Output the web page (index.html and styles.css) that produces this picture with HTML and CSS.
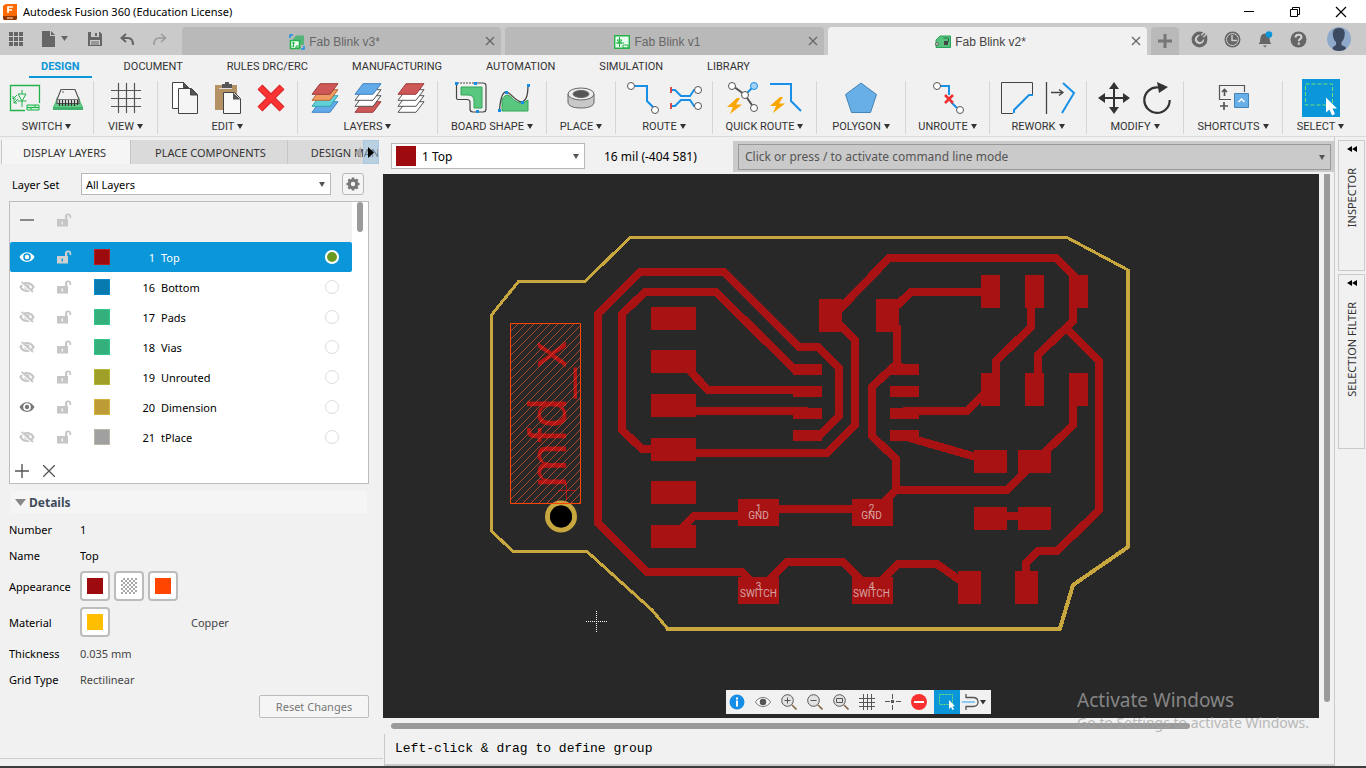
FILE: index.html
```html
<!DOCTYPE html>
<html lang="en">
<head>
<meta charset="utf-8">
<title>Autodesk Fusion 360 (Education License)</title>
<link rel="stylesheet" href="styles.css">
</head>
<body>
<svg class="defs" aria-hidden="true">
  <symbol id="caret" viewBox="0 0 6 5"><path d="M0 0h6L3 5z" fill="currentColor"/></symbol>
  <symbol id="lock" viewBox="0 0 16 16"><path d="M1 7h8V4.500a3 3 0 0 1 6.200 0V6h-1.700V4.500c0-1.800-2.300-1.800-2.300 0V7h.8v7.500H1zM5.600 9.500v3h1.300v-3z" fill="currentColor" fill-rule="evenodd"/></symbol>
  <symbol id="eye" viewBox="0 0 16 12"><path d="M.5 6C4-.5 12-.5 15.500 6 12 12.500 4 12.500.5 6zM8 2.200a3.800 3.800 0 1 0 0 7.600 3.800 3.800 0 0 0 0-7.600zm0 1.600a2.200 2.200 0 1 1 0 4.400 2.200 2.200 0 0 1 0-4.400z" fill="currentColor" fill-rule="evenodd"/></symbol>
  <symbol id="eye-off" viewBox="0 0 16 12"><path d="M1.500 6c3-5.300 10-5.300 13 0-3 5.300-10 5.300-13 0z" fill="none" stroke="currentColor" stroke-width="2.200"/><circle cx="8" cy="6" r="2.600" fill="currentColor"/><path d="M1.500 1.500l12 10" stroke="#fff" stroke-width="2"/><path d="M2.500.8l11.500 10.200" stroke="currentColor" stroke-width="1.700"/></symbol>
  <symbol id="sheet" viewBox="0 0 28 12"><path d="M9 .7h18L19 11.300H1z" stroke-width="1"/></symbol>
  <symbol id="close" viewBox="0 0 10 10"><path d="M1 1l8 8M9 1L1 9" stroke="currentColor" stroke-width="1.300"/></symbol>
  <symbol id="bolt" viewBox="0 0 16 16"><path d="M10 0L0 9h6l-3 7L15 6.500H9L13 0z" fill="#fba500"/></symbol>
  <symbol id="pick" viewBox="0 0 38 35"><path d="M3.500 3.500h27v21h-27z" fill="none" stroke="#6fe07a" stroke-dasharray="4 2"/><path d="M24 17v15l3.500-3 2.500 6 3-1.500-2.500-5.500H35z" fill="#fff"/></symbol>
</svg>

<header class="titlebar">
  <svg class="app-logo" viewBox="0 0 14 16"><path d="M1 1l2-1h11v12l-1 1H0V2z" fill="#ff6b00"/><path d="M0 12h13l1-1v4l-1 1H1l-1-1z" fill="#903700"/><path d="M5 9V3h5M5 6h4" stroke="#fff" stroke-width="1.700" fill="none"/><path d="M4 14h6" stroke="#e4b08c" stroke-width="1.500"/></svg>
  <h1 class="app-title">Autodesk Fusion 360 (Education License)</h1>
  <button class="win-btn" aria-label="Minimize"><svg viewBox="0 0 12 12"><path d="M1 5.500h10" stroke="#000"/></svg></button>
  <button class="win-btn" aria-label="Restore"><svg viewBox="0 0 12 12" fill="none" stroke="#000"><path d="M1.500 3.500h7v7h-7zM3.500 3V1.500h7v7H9"/></svg></button>
  <button class="win-btn" aria-label="Close"><svg viewBox="0 0 12 12"><path d="M1 1l10 10M11 1L1 11" stroke="#000" stroke-width="1.200"/></svg></button>
</header>

<nav class="tabbar" aria-label="Documents">
  <div class="quick">
    <button aria-label="Data panel"><svg width="14" height="14" viewBox="0 0 14 14" fill="#666"><path d="M0 0h4v4H0zM5 0h4v4H5zM10 0h4v4h-4zM0 5h4v4H0zM5 5h4v4H5zM10 5h4v4h-4zM0 10h4v4H0zM5 10h4v4H5zM10 10h4v4h-4z"/></svg></button>
    <button aria-label="File"><svg width="27" height="16" viewBox="0 0 27 16" fill="#666"><path d="M0 0h8v5h5v11H0zM9 0l4 4H9zM19 5h7l-3.500 5z"/></svg></button>
    <button aria-label="Save"><svg width="14" height="14" viewBox="0 0 14 14"><path d="M0 0h12l2 2v12H0z" fill="#666"/><path d="M3 0h8v5H3zM2 8h10v5H2z" fill="#cacaca"/><path d="M7 1h2v3H7zM3 9.500h8v1H3zM3 11.500h8v1H3z" fill="#666"/></svg></button>
    <button aria-label="Undo"><svg width="14" height="13" viewBox="0 0 14 13"><path d="M6 1L1.500 5 6 9M2 5h6q5 0 5 7" fill="none" stroke="#666" stroke-width="2"/></svg></button>
    <button aria-label="Redo"><svg width="14" height="13" viewBox="0 0 14 13"><path d="M8 1l4.500 4L8 9M12 5H6q-5 0-5 7" fill="none" stroke="#9a9a9a" stroke-width="1.600"/></svg></button>
  </div>
  <div class="doc-tab">
    <svg width="16" height="16" viewBox="0 0 16 16" fill="none"><path d="M1 4V1h3M12 15h3v-3" stroke="#1790e8" stroke-width="1.500"/><path d="M4 5l3-3.500h8V11H4z" fill="#55b578"/><path d="M1.500 6.500h9v8h-9z" fill="#effff4" stroke="#26b24b" stroke-width="1.500"/><path d="M3 9h3M3 12h2M4.500 8v5M7 12h4v2H7z" stroke="#26b24b"/></svg>
    <a href="#v3">Fab Blink v3*</a><button class="tab-x" aria-label="Close tab"><svg><use href="#close"/></svg></button>
  </div>
  <div class="doc-tab">
    <svg width="16" height="16" viewBox="0 0 16 16" fill="none"><path d="M.7 1.700h14.600v12.600H.7z" fill="#e8fff0" stroke="#26b24b" stroke-width="1.400"/><path d="M2 9h8M5.500 3v10M3 6h5L5.500 9zM3 9h5M9 11h5v3H9z" stroke="#26b24b"/></svg>
    <a href="#v1">Fab Blink v1</a><button class="tab-x" aria-label="Close tab"><svg><use href="#close"/></svg></button>
  </div>
  <div class="doc-tab current">
    <svg width="16" height="14" viewBox="0 0 16 14"><path d="M5 1h10.500v11.500H1V5z" fill="#55c37e" stroke="#2ba45b"/><path d="M8.500 3h5v4" fill="none" stroke="#27794a"/><path d="M9 6h4v4H9z" fill="#444"/><circle cx="2" cy="9" r="1.400" fill="#fff" stroke="#555"/></svg>
    <a href="#v2" aria-current="page">Fab Blink v2*</a><button class="tab-x" aria-label="Close tab"><svg><use href="#close"/></svg></button>
  </div>
  <button class="new-tab" aria-label="New tab"><svg width="14" height="14" viewBox="0 0 14 14"><path d="M7 0v14M0 7h14" stroke="#777" stroke-width="3"/></svg></button>
  <div class="account">
    <button aria-label="Extensions"><svg width="17" height="17" viewBox="0 0 17 17"><circle cx="8.500" cy="8.500" r="6.300" fill="none" stroke="#666" stroke-width="3.200"/><path d="M16 1L9 8" stroke="#cacaca" stroke-width="5"/><path d="M9.500 3.500l4 4-2.500 2.500a2.800 2.800 0 0 1-4-4z" fill="#666"/><path d="M11 5.500l3-3M13 7.500l3-3" stroke="#666" stroke-width="1.500"/></svg></button>
    <button aria-label="Job status"><svg width="17" height="17" viewBox="0 0 17 17"><circle cx="8.500" cy="8.500" r="8" fill="#666"/><circle cx="8.500" cy="8.500" r="6" fill="none" stroke="#cacaca"/><path d="M8 4v5.500h5" fill="none" stroke="#cacaca" stroke-width="1.500"/></svg></button>
    <button aria-label="Notifications"><svg width="17" height="17" viewBox="0 0 17 17"><path d="M1.500 13c2-1.500 1.500-4 2-6.500C4 4 6 2.500 8 2.500S12 4 12.500 6.500c.5 2.500 0 5 2 6.500zM6 14.500h4L8 16.500z" fill="#666"/><circle cx="12" cy="3.500" r="3.300" fill="#0a96d8"/></svg></button>
    <button aria-label="Help"><svg width="17" height="17" viewBox="0 0 17 17"><circle cx="8.500" cy="8.500" r="8" fill="#666"/><path d="M5.500 6.500c0-4 6-3.500 6-.5 0 2-2.700 1.800-2.700 4.300M8.800 11.500V13.800" fill="none" stroke="#d4d4d4" stroke-width="2"/></svg></button>
    <button class="avatar" aria-label="Account"><svg width="24" height="24" viewBox="0 0 24 24"><defs><clipPath id="round"><circle cx="12" cy="12" r="12"/></clipPath></defs><g clip-path="url(#round)"><path d="M0 0h24v24H0z" fill="#8fa9ca"/><path d="M12 1c5 0 6.500 3.500 5.500 8-.5 3-1.500 5-3 6v3l4 2 2 4H5l1-4 3-2v-3c-1.500-1-2.500-3-3-6C5 4.500 7 1 12 1z" fill="#3c4a62"/></g></svg></button>
  </div>
</nav>

<nav class="ribbon-tabs" aria-label="Ribbon">
  <a class="active" href="#design">DESIGN</a><a href="#document">DOCUMENT</a><a href="#rules">RULES DRC/ERC</a><a href="#manufacturing">MANUFACTURING</a><a href="#automation">AUTOMATION</a><a href="#simulation">SIMULATION</a><a href="#library">LIBRARY</a>
</nav>

<section class="ribbon" aria-label="Tools">
  <div class="group"><div class="tools">
    <button aria-label="Schematic"><svg viewBox="0 0 32 32" fill="none" stroke="#21b24b"><path d="M16 28.500H1.500v-25h29V21" stroke-width="1.300"/><path d="M13 8v4M9 12h8l-4 7zM8.500 19h9M13 19v6M8 13l-4 4M9 17l-4 4M4 14v3h3M5 18v3h3"/><path d="M18 23h12v5H18zM18 25.500h12M22 25.500V28M26 23v2.500" fill="#c5f5d2"/></svg></button>
    <button aria-label="Board"><svg viewBox="0 0 32 32"><path d="M5 17h22l4 8v3H1v-3z" fill="#42b36d"/><path d="M5 15h22l3 10H2z" fill="#64cc8a"/><path d="M9 7.500h14l4 10v4H5v-4z" fill="#f2f2f2" stroke="#555" stroke-width="1.200"/><path d="M5 17.500h22" stroke="#777"/><path d="M7.500 18v6M10.500 18v6M13.500 18v6M16.500 18v6M19.500 18v6M22.500 18v6M25.500 18v5" stroke="#333" stroke-width="1.300"/><path d="M10 10h2" stroke="#666"/></svg></button>
  </div><button class="menu">SWITCH<svg><use href="#caret"/></svg></button></div>
  <div class="group"><div class="tools">
    <button aria-label="Grid"><svg viewBox="0 0 32 32"><path d="M1 8.500h30M1 16.500h30M1 24.500h30M8.500 1v30M16.500 1v30M24.500 1v30" stroke="#555" stroke-width="1.200"/></svg></button>
  </div><button class="menu">VIEW<svg><use href="#caret"/></svg></button></div>
  <div class="group"><div class="tools">
    <button aria-label="Copy"><svg viewBox="0 0 32 32" fill="#fff" stroke="#444"><path d="M3.500.5h11l5 5v21h-16z"/><path d="M14.500.5v5h5z" fill="#555"/><path d="M9.500 6.500h13l6 6v19h-19z" fill="#f5f5f5"/><path d="M21.500 6.500v6.500h7z" fill="#555"/></svg></button>
    <button aria-label="Paste"><svg viewBox="0 0 32 32"><path d="M3 3h22v25H3z" fill="#b49264"/><path d="M10 2h3V0h4v2h3v4H10z" fill="#555"/><path d="M7 6.500h13" stroke="#ddd"/><path d="M11.500 10.500h11l6 6v15h-17z" fill="#f8f8f8" stroke="#444"/><path d="M21 10.500v7h7.500z" fill="#555"/></svg></button>
    <button aria-label="Delete"><svg viewBox="0 0 32 32"><path d="M5 5l22 22M27 5L5 27" stroke="#d32424" stroke-width="7"/><path d="M5 5l22 22M27 5L5 27" stroke="#fb3333" stroke-width="5"/></svg></button>
  </div><button class="menu">EDIT<svg><use href="#caret"/></svg></button></div>
  <div class="group"><div class="tools">
    <button aria-label="All layers"><svg viewBox="0 0 32 32"><use href="#sheet" x="2" y="19" width="28" height="12" fill="#62aae8" stroke="#3d83c0"/><use href="#sheet" x="2" y="13" width="28" height="12" fill="#60d1d8" stroke="#36a4ac"/><use href="#sheet" x="2" y="7" width="28" height="12" fill="#ee9a61" stroke="#b66b36"/><use href="#sheet" x="2" y="1" width="28" height="12" fill="#ce5757" stroke="#9f3c3c"/></svg></button>
    <button aria-label="Top and bottom layers"><svg viewBox="0 0 32 32"><use href="#sheet" x="2" y="19" width="28" height="12" fill="#ce5757" stroke="#9f3c3c"/><use href="#sheet" x="2" y="13" width="28" height="12" fill="#fff" stroke="#555"/><use href="#sheet" x="2" y="7" width="28" height="12" fill="#fff" stroke="#555"/><use href="#sheet" x="2" y="1" width="28" height="12" fill="#62aae8" stroke="#3d83c0"/></svg></button>
    <button aria-label="Top layer"><svg viewBox="0 0 32 32"><use href="#sheet" x="2" y="19" width="28" height="12" fill="#fff" stroke="#555"/><use href="#sheet" x="2" y="13" width="28" height="12" fill="#fff" stroke="#555"/><use href="#sheet" x="2" y="7" width="28" height="12" fill="#fff" stroke="#555"/><use href="#sheet" x="2" y="1" width="28" height="12" fill="#ce5757" stroke="#9f3c3c"/></svg></button>
  </div><button class="menu">LAYERS<svg><use href="#caret"/></svg></button></div>
  <div class="group"><div class="tools">
    <button aria-label="Outline polyline"><svg viewBox="0 0 32 32"><path d="M6 5h21v21h-8v-7q0-6-6-6H6z" fill="#5ac77e" stroke="#34a35b"/><path d="M1.500 1v15q0 1.500 1.500 1.500h9q3 0 3 3V27q0 3 3 3h10q3 0 3-3V4q0-3-3-3h-6" fill="none" stroke="#444" stroke-width="1.200"/><path d="M2 1h20" stroke="#444" stroke-dasharray="2 1"/><path d="M0 0h3v3H0zM19 0h3v3h-3zM21 28h3v3h-3z" fill="#168ee8"/></svg></button>
    <button aria-label="Outline spline"><svg viewBox="0 0 32 32"><path d="M4 29V18q3-7 8-4 7 8 13 7l5-3v11z" fill="#5ac77e" stroke="#34a35b"/><path d="M1.500 28Q3 10 8 10c5 0 9 10 16 10 5-2 6-8 6-18" fill="none" stroke="#444" stroke-width="1.300"/><path d="M0 27h3v3H0zM7 9h3v3H7zM23 19h3v3h-3zM29 2h3v3h-3z" fill="#168ee8"/></svg></button>
  </div><button class="menu">BOARD SHAPE<svg><use href="#caret"/></svg></button></div>
  <div class="group"><div class="tools">
    <button aria-label="Hole"><svg viewBox="0 0 32 32" stroke="#666"><path d="M3 12v8c0 4 5 6 13 6s13-2 13-6v-8z" fill="#c8c8c8"/><ellipse cx="16" cy="12" rx="13" ry="6" fill="#ececec"/><ellipse cx="16" cy="12" rx="8" ry="3.500" fill="#555"/></svg></button>
  </div><button class="menu">PLACE<svg><use href="#caret"/></svg></button></div>
  <div class="group"><div class="tools">
    <button aria-label="Route manual"><svg viewBox="0 0 32 32" fill="none"><path d="M8 4h12v15l7 7" stroke="#1990e8" stroke-width="2"/><circle cx="4" cy="4" r="3.500" fill="#fff" stroke="#555"/><circle cx="28" cy="28" r="3.500" fill="#fff" stroke="#555"/></svg></button>
    <button aria-label="Route differential pair"><svg viewBox="0 0 32 32" fill="none"><path d="M1 8h4l6 6h9l4-6h3M1 24h4l6-6h9l4 6h3" stroke="#1990e8" stroke-width="2"/><path d="M1 5v6M1 21v6" stroke="#d33" stroke-width="1.700"/><circle cx="28" cy="8" r="3.500" fill="#fff" stroke="#555"/><circle cx="28" cy="24" r="3.500" fill="#fff" stroke="#555"/></svg></button>
  </div><button class="menu">ROUTE<svg><use href="#caret"/></svg></button></div>
  <div class="group"><div class="tools">
    <button aria-label="Quick route airwire"><svg viewBox="0 0 32 32"><path d="M6 4l12 9 9 13" stroke="#555" stroke-width="2" fill="none"/><path d="M19 12l8-8" stroke="#1990e8" stroke-width="2"/><circle cx="5" cy="4" r="3.500" fill="#fff" stroke="#555"/><circle cx="27" cy="4" r="3.500" fill="#a5d2f5" stroke="#1990e8"/><circle cx="18" cy="13" r="3.500" fill="#fff" stroke="#555"/><circle cx="27" cy="26" r="3.500" fill="#fff" stroke="#555"/><use href="#bolt" x="0" y="16" width="16" height="16"/></svg></button>
    <button aria-label="Quick route signal"><svg viewBox="0 0 32 32"><path d="M0 2h21v17l10 10" stroke="#1990e8" stroke-width="2" fill="none"/><use href="#bolt" x="0" y="15" width="16" height="16"/></svg></button>
  </div><button class="menu">QUICK ROUTE<svg><use href="#caret"/></svg></button></div>
  <div class="group"><div class="tools">
    <button aria-label="Polygon"><svg viewBox="0 0 32 32"><path d="M16 1l15.500 11.500-6 18h-19l-6-18z" fill="#68afe7" stroke="#4684b5"/></svg></button>
  </div><button class="menu">POLYGON<svg><use href="#caret"/></svg></button></div>
  <div class="group"><div class="tools">
    <button aria-label="Unroute"><svg viewBox="0 0 32 32" fill="none"><path d="M8 4h9v9M19 20l6 6" stroke="#1990e8" stroke-width="2"/><path d="M13 13l8 8M21 13l-8 8" stroke="#f03030" stroke-width="2.500"/><circle cx="5" cy="4" r="3.500" fill="#fff" stroke="#555"/><circle cx="28" cy="28" r="3.500" fill="#fff" stroke="#555"/></svg></button>
  </div><button class="menu">UNROUTE<svg><use href="#caret"/></svg></button></div>
  <div class="group"><div class="tools">
    <button aria-label="Miter"><svg viewBox="0 0 32 32" fill="none"><path d="M12 31.500H.5V.5h31v12" stroke="#444"/><path d="M13 31v-3l15-15h4" stroke="#1990e8" stroke-width="2"/></svg></button>
    <button aria-label="Slice"><svg viewBox="0 0 32 32" fill="none"><path d="M2.500 0v32M7 10.500h11M15 7.500l4 3-4 3" stroke="#444" stroke-width="1.300"/><path d="M19 1l11 10-12 20" stroke="#1990e8" stroke-width="2"/></svg></button>
  </div><button class="menu">REWORK<svg><use href="#caret"/></svg></button></div>
  <div class="group"><div class="tools">
    <button aria-label="Move"><svg viewBox="0 0 32 32"><path d="M16 4v24M4 16h24" stroke="#333" stroke-width="2"/><path d="M16 0l5 7H11zM16 32l5-7H11zM0 16l7-5v10zM32 16l-7-5v10z" fill="#333"/></svg></button>
    <button aria-label="Rotate"><svg viewBox="0 0 32 32"><path d="M17 5.500A12.700 12.700 0 1 0 28.700 18" fill="none" stroke="#333" stroke-width="2.200"/><path d="M16 0l11 5-9 6z" fill="#333"/></svg></button>
  </div><button class="menu">MODIFY<svg><use href="#caret"/></svg></button></div>
  <div class="group"><div class="tools">
    <button aria-label="Shortcuts"><svg viewBox="0 0 32 32" fill="none"><path d="M14 17.500H2.500v-14h25V10" stroke="#555" stroke-width="1.200"/><path d="M7.500 8v6M5 10l2.500-2.500L10 10M7 20v8M3 24h8" stroke="#555" stroke-width="1.700"/><path d="M17.500 11.500h14v14h-14z" fill="#68afe7" stroke="#4684b5"/><path d="M21.500 20l3-3 3 3" stroke="#fff" stroke-width="1.500"/></svg></button>
  </div><button class="menu">SHORTCUTS<svg><use href="#caret"/></svg></button></div>
  <div class="group"><div class="tools">
    <button class="pick" aria-label="Select"><svg><use href="#pick"/></svg></button>
  </div><button class="menu">SELECT<svg><use href="#caret"/></svg></button></div>
</section>

<main class="workspace">
  <aside class="panel">
    <div class="panel-tabs">
      <button class="panel-tab on">DISPLAY LAYERS</button><button class="panel-tab">PLACE COMPONENTS</button><button class="panel-tab">DESIGN MANAGER</button>
      <div class="tab-scroll"><button aria-label="Scroll left"><svg width="6" height="11" viewBox="0 0 6 11"><path d="M6 0v11L0 5.500z" fill="#a5a5a5"/></svg></button><button class="right" aria-label="Scroll right"><svg width="6" height="11" viewBox="0 0 6 11"><path d="M0 0v11l6-5.500z"/></svg></button></div>
    </div>
    <div class="layer-set">
      <label for="set">Layer Set</label>
      <span class="drop"><select id="set"><option>All Layers</option></select><svg><use href="#caret"/></svg></span>
      <button class="gear" aria-label="Layer settings"><svg width="14" height="14" viewBox="-7 -7 14 14"><circle r="3.700" fill="none" stroke="#777" stroke-width="3"/><path d="M0-6.500V-4M0 6.500V4M-6.500 0H-4M6.500 0H4M-4.600-4.600l1.600 1.600M4.600 4.600L3 3M-4.600 4.600L-3 3M4.600-4.600L3-3" stroke="#777" stroke-width="2.600"/></svg></button>
    </div>
    <div class="layers">
      <div class="layer-list">
        <div class="layer head"><button class="vis" aria-label="Toggle all"><svg viewBox="0 0 16 12"><path d="M1 6h14" stroke="#888" stroke-width="2"/></svg></button><button class="lock" aria-label="Lock all"><svg><use href="#lock"/></svg></button></div>
        <div class="layer selected"><button class="vis" aria-label="Hide Top"><svg><use href="#eye"/></svg></button><button class="lock" aria-label="Lock Top"><svg><use href="#lock"/></svg></button><span class="swatch top"></span><label for="l1"><b>1</b>Top</label><input type="radio" name="layer" id="l1" checked></div>
        <div class="layer"><button class="vis" aria-label="Show Bottom"><svg><use href="#eye-off"/></svg></button><button class="lock" aria-label="Lock Bottom"><svg><use href="#lock"/></svg></button><span class="swatch bottom"></span><label for="l16"><b>16</b>Bottom</label><input type="radio" name="layer" id="l16"></div>
        <div class="layer"><button class="vis" aria-label="Show Pads"><svg><use href="#eye-off"/></svg></button><button class="lock" aria-label="Lock Pads"><svg><use href="#lock"/></svg></button><span class="swatch pads-fill"></span><label for="l17"><b>17</b>Pads</label><input type="radio" name="layer" id="l17"></div>
        <div class="layer"><button class="vis" aria-label="Show Vias"><svg><use href="#eye-off"/></svg></button><button class="lock" aria-label="Lock Vias"><svg><use href="#lock"/></svg></button><span class="swatch pads-fill"></span><label for="l18"><b>18</b>Vias</label><input type="radio" name="layer" id="l18"></div>
        <div class="layer"><button class="vis" aria-label="Show Unrouted"><svg><use href="#eye-off"/></svg></button><button class="lock" aria-label="Lock Unrouted"><svg><use href="#lock"/></svg></button><span class="swatch unrouted"></span><label for="l19"><b>19</b>Unrouted</label><input type="radio" name="layer" id="l19"></div>
        <div class="layer"><button class="vis shown" aria-label="Hide Dimension"><svg><use href="#eye"/></svg></button><button class="lock" aria-label="Lock Dimension"><svg><use href="#lock"/></svg></button><span class="swatch dimension"></span><label for="l20"><b>20</b>Dimension</label><input type="radio" name="layer" id="l20"></div>
        <div class="layer"><button class="vis" aria-label="Show tPlace"><svg><use href="#eye-off"/></svg></button><button class="lock" aria-label="Lock tPlace"><svg><use href="#lock"/></svg></button><span class="swatch tplace"></span><label for="l21"><b>21</b>tPlace</label><input type="radio" name="layer" id="l21"></div>
      </div>
      <div class="list-scroll"><span></span></div>
      <div class="list-actions"><button aria-label="Add layer"><svg width="14" height="14" viewBox="0 0 14 14"><path d="M7 0v14M0 7h14" stroke="#555" stroke-width="1.400"/></svg></button><button aria-label="Remove layer"><svg width="12" height="12" viewBox="0 0 12 12"><path d="M0 0l12 12M12 0L0 12" stroke="#555" stroke-width="1.300"/></svg></button></div>
    </div>
    <h2 class="details-head"><svg width="11" height="7" viewBox="0 0 11 7"><path d="M0 0h11L5.500 7z" fill="#888"/></svg>Details</h2>
    <div class="details">
      <label for="num">Number</label><input id="num" value="1">
      <label for="nam">Name</label><input id="nam" value="Top">
      <span>Appearance</span><div class="chips"><button aria-label="Color"><i class="chip"></i></button><button aria-label="Fill pattern"><i class="chip checker"></i></button><button aria-label="Highlight"><i class="chip bright"></i></button></div>
      <span>Material</span><div class="chips"><button aria-label="Material color"><i class="chip copper"></i></button><span class="value material">Copper</span></div>
      <span>Thickness</span><span class="value">0.035 mm</span>
      <span>Grid Type</span><span class="value">Rectilinear</span>
    </div>
    <button class="reset">Reset Changes</button>
  </aside>

  <section class="editor">
    <div class="command-row">
      <span class="drop layer-drop"><i class="chip"></i><select aria-label="Active layer"><option>1 Top</option></select><svg><use href="#caret"/></svg></span>
      <output class="coords">16 mil (-404 581)</output>
      <div class="command"><span class="drop"><input type="text" aria-label="Command line" placeholder="Click or press / to activate command line mode"><svg><use href="#caret"/></svg></span></div>
    </div>
    <div class="canvas">
      <svg class="board" viewBox="383 174 936 544" role="img" aria-label="Board layout">
        <defs><pattern id="hatch" width="8" height="8" patternUnits="userSpaceOnUse" x="511" y="323"><path d="M-1 9L9-1M-1 1l2-2M7 9l2-2" stroke="#e8552a" stroke-width=".7"/></pattern></defs>
        <g class="outline">
          <path d="M1067 237.500H630L585 281.500H518.500L491.500 315V531L513 551.500H587L652 610L667 628" />
          <path d="M1066 237L1128 270" />
          <path class="thick" d="M1128 269V547L1073 585L1060 628.500H666" />
        </g>
        <g class="traces">
          <path d="M760 590L742 572H647L598 523V314L640 272H724L799 347H818L839 368V416L821 434H808"/>
          <path d="M660 449H642L622 430V314L645 292H716L794 369H808"/>
          <path d="M688 369L708 390H808M680 411H808"/>
          <path d="M680 453H827L855 425V340L835 320"/>
          <path d="M835 314L889 258H1056L1080 282M1073 300V321L1038 355V380"/>
          <path d="M1065 327L1099 361V510L1057 551H1038L1026 563V580"/>
          <path d="M890 312L911 292H990M1031 290V327L996 361V390"/>
          <path d="M897 325V370M903 367H893L872 387V436L896 459V490L880 506"/>
          <path d="M903 411H967L992 386M903 436L976 457"/>
          <path d="M896 490H1007L1034 463M1040 457L1073 425V390"/>
          <path d="M770 509H860M680 530L694 516H745M758 591L787 562H843L868 587M875 587L898 564H937L964 583M1000 516H1025"/>
        </g>
        <path class="pads" d="M651 307h45v23h-45zM651 350h45v23h-45zM651 394h45v23h-45zM651 438h45v23h-45zM651 481h45v23h-45zM651 525h45v23h-45z
          M793 364h29v11h-29zM793 386h29v11h-29zM793 408h29v11h-29zM793 430h29v11h-29z
          M890 364h29v11h-29zM890 386h29v11h-29zM890 408h29v11h-29zM890 430h29v11h-29z
          M819 299h23v33h-23zM876 299h23v33h-23zM981 275h19v33h-19zM1025 275h19v33h-19zM1069 275h19v33h-19z
          M981 373h19v33h-19zM1025 373h19v33h-19zM1069 373h19v33h-19z
          M974 450h33v23h-33zM1018 450h33v23h-33zM974 507h33v23h-33zM1018 507h33v23h-33z
          M738 499h41v27h-41zM852 499h41v27h-41zM738 577h41v27h-41zM852 577h41v27h-41zM958 571h23v33h-23zM1015 571h23v33h-23z"/>
        <circle cx="561" cy="516.500" r="13.500" fill="none" stroke="#c8a83e" stroke-width="5"/><circle cx="561" cy="516.500" r="11" fill="#000"/>
        <text class="maker" transform="translate(566 488) rotate(-90)">mfd_x</text>
        <path d="M566.500 483v17M558 490.500h17" stroke="#a81212"/>
        <path d="M510.500 323.500h70v180h-70z" fill="url(#hatch)" stroke="#ff4500"/>
        <g class="pad-names"><text x="758.500" y="512">1</text><text x="758.500" y="519">GND</text><text x="871.500" y="512">2</text><text x="871.500" y="519">GND</text><text x="758.500" y="590">3</text><text x="758.500" y="597">SWITCH</text><text x="871.500" y="590">4</text><text x="871.500" y="597">SWITCH</text></g>
        <path d="M586 621.500h21M596.500 611v21" stroke="#fff" stroke-dasharray="1 1"/>
      </svg>
      <div class="view-bar">
        <button aria-label="Info"><svg viewBox="0 0 16 16"><circle cx="8" cy="8" r="7.500" fill="#168ee8"/><path d="M8 6.500V12.500M8 3.500v2" stroke="#fff" stroke-width="2"/></svg></button>
        <button aria-label="Visibility"><svg viewBox="0 0 16 16"><path d="M.5 8C4 2 12 2 15.500 8 12 14 4 14 .5 8z" fill="#fff" stroke="#777"/><circle cx="8" cy="8" r="3.300" fill="#555"/></svg></button>
        <button aria-label="Zoom in"><svg viewBox="0 0 16 16" fill="none"><circle cx="6.500" cy="6.500" r="5.800" fill="#e3e3e3" stroke="#555"/><path d="M3.500 6.500h6M6.500 3.500v6" stroke="#555"/><path d="M11 11l4.500 4.500" stroke="#8a6b4c" stroke-width="1.700"/></svg></button>
        <button aria-label="Zoom out"><svg viewBox="0 0 16 16" fill="none"><circle cx="6.500" cy="6.500" r="5.800" fill="#e3e3e3" stroke="#555"/><path d="M3.500 6.500h6" stroke="#555"/><path d="M11 11l4.500 4.500" stroke="#8a6b4c" stroke-width="1.700"/></svg></button>
        <button aria-label="Zoom to fit"><svg viewBox="0 0 16 16" fill="none"><circle cx="6.500" cy="6.500" r="5.800" fill="#e3e3e3" stroke="#555"/><path d="M3.500 4.500h6v4h-6z" stroke="#555"/><path d="M11 11l4.500 4.500" stroke="#8a6b4c" stroke-width="1.700"/></svg></button>
        <button aria-label="Grid"><svg viewBox="0 0 16 16"><path d="M0 4.500h16M0 8.500h16M0 12.500h16M4.500 0v16M8.500 0v16M12.500 0v16" stroke="#555"/></svg></button>
        <button aria-label="Origin"><svg viewBox="0 0 16 16"><path d="M7.500 0v5M7.500 11v5M0 7.500h5M11 7.500h5" stroke="#555"/><path d="M6 6h3v3H6z" fill="#555"/></svg></button>
        <button aria-label="Stop"><svg viewBox="0 0 16 16"><circle cx="8" cy="8" r="8" fill="#fb3030"/><path d="M3 8h10" stroke="#fff" stroke-width="2"/></svg></button>
        <button class="on" aria-label="Select"><svg viewBox="0 0 16 16"><path d="M.5.5h13v10H.5z" fill="none" stroke="#6fe07a" stroke-dasharray="2 1"/><path d="M10 6v9l2-2 1.500 3 1.500-.8-1.500-3H16z" fill="#fff"/></svg></button>
        <button class="wide" aria-label="Selection options"><svg viewBox="0 0 24 16" fill="none"><path d="M4 0v3.500h7q5 0 5 4.500t-5 4.500H4V16" stroke="#555" stroke-width="1.300"/><path d="M0 8h13" stroke="#8cc8f2" stroke-width="2"/><path d="M18 6h6l-3 4.500z" fill="#333"/></svg></button>
      </div>
      <div class="watermark"><p class="big">Activate Windows</p><p>Go to Settings to activate Windows.</p></div>
    </div>
    <div class="vscroll"><span></span></div>
    <div class="hscroll"><span></span></div>
    <div class="status">Left-click &amp; drag to define group</div>
  </section>

  <aside class="side">
    <button class="side-tab inspector"><svg width="10" height="6" viewBox="0 0 10 6"><path d="M5 0v6L0 3zM10 0v6L5 3z"/></svg><span>INSPECTOR</span></button>
    <button class="side-tab filter"><svg width="10" height="6" viewBox="0 0 10 6"><path d="M5 0v6L0 3zM10 0v6L5 3z"/></svg><span>SELECTION FILTER</span></button>
  </aside>
</main>
</body>
</html>
```

FILE: styles.css
```css
* { box-sizing: border-box; }
body { margin: 0; min-height: 100vh; display: flex; flex-direction: column; background: #f1f1f1; color: #000; font-family: "Noto Sans", sans-serif; font-size: 11px; border-bottom: 2px solid #3d3d3f; }
button, input, select { font: inherit; color: inherit; margin: 0; padding: 0; border: 0; background: none; }
button { display: flex; align-items: center; justify-content: center; }
a { color: inherit; text-decoration: none; }
svg { display: block; flex: none; }
.defs { position: absolute; width: 0; height: 0; }

.titlebar { display: flex; align-items: center; height: 23px; padding-left: 3px; background: #fff; }
.app-logo { width: 14px; height: 16px; }
.app-title { flex: 1; margin: 0 0 0 6px; font: 11px "Noto Sans", sans-serif; }
.win-btn { width: 46px; height: 20px; }
.win-btn svg { width: 12px; height: 12px; }
.win-btn:last-child { margin-right: 2px; }

.tabbar { display: flex; gap: 4px; height: 32px; padding-top: 4px; background: #cacaca; font: 12px "Liberation Sans", sans-serif; }
.quick { display: flex; align-items: center; justify-content: space-between; width: 178px; padding: 0 11px 4px 9px; }
.doc-tab { flex: 1; display: flex; align-items: center; justify-content: center; gap: 4px; padding: 1px 14px 0 0; background: #b9b9b9; color: #666; border-radius: 4px 4px 0 0; position: relative; }
.doc-tab.current { background: #f1f1f1; color: #444; }
.tab-x { position: absolute; right: 6px; top: 9px; color: #666; }
.tab-x svg { width: 10px; height: 10px; }
.new-tab { width: 28px; background: #b9b9b9; border-radius: 4px 4px 0 0; }
.account { display: flex; align-items: center; gap: 16px; padding: 0 15px 4px 8px; }
.avatar { margin-left: 4px; }

.ribbon-tabs { display: flex; gap: 20px; height: 23px; padding-left: 29px; font: 11px/23px Roboto, sans-serif; color: #333; }
.ribbon-tabs a { padding: 0 12px; }
.ribbon-tabs .active { color: #0a96d8; font-weight: 700; box-shadow: inset 0 -2px #0a96d8; }

.ribbon { display: grid; grid-template-columns: 94fr 64fr 140fr 140fr 109fr 69fr 97fr 104fr 89fr 84fr 97fr 97fr 99fr 75fr; height: 59px; padding-right: 8px; border-bottom: 1px solid #d9d9d9; font: 11px Roboto, sans-serif; color: #333; }
.group { display: flex; flex-direction: column; align-items: center; padding-top: 1px; height: 53px; margin-top: 3px; border-right: 1px solid #d6d6d6; }
.group:last-child { border: 0; }
.tools { display: flex; align-items: center; gap: 11px; height: 32px; }
.tools svg { width: 32px; height: 32px; }
.tools .pick { background: #0a96d8; }
.tools .pick svg { width: 38px; height: 38px; }
.menu { gap: 3px; height: 16px; margin-top: 5px; white-space: nowrap; }
.menu svg { width: 6px; height: 5px; }

.workspace { flex: 1; display: grid; grid-template-columns: 383px 1fr 31px; }
.panel { border-bottom: 1px solid #d0d0d0; margin-bottom: 7px; padding: 3px 14px 0 0; }
.panel-tabs { position: relative; display: flex; height: 24px; margin: 0 -10px 0 1px; overflow: hidden; color: #333; }
.panel-tab { flex: none; background: #dadada; border-left: 1px solid #c6c6c6; padding: 0 21px 0 24px; white-space: nowrap; }
.panel-tab.on { background: #f5f5f5; padding: 0 24px 0 21px; }
.panel-tab:nth-child(3) { padding: 0 0 0 23px; }
.tab-scroll { position: absolute; right: 0; top: 0; display: flex; height: 24px; }
.tab-scroll button { width: 10px; }
.tab-scroll .right { width: 16px; background: rgba(154, 197, 232, .5); border: 1px solid #a8c9e0; }
.layer-set { display: flex; align-items: center; gap: 11px; margin: 9px 5px 0 12px; height: 22px; }
.layer-set label { width: 58px; }
.drop { position: relative; display: flex; flex: 1; height: 22px; background: #fff; border: 1px solid #b8b8b8; }
.drop select, .drop input { width: 100%; padding: 0 4px; appearance: none; outline: 0; }
.drop svg { position: absolute; right: 5px; top: 8px; width: 6px; height: 5px; color: #555; pointer-events: none; }
.gear { width: 22px; height: 22px; border: 1px solid #b8b8b8; border-radius: 3px; background: #f5f5f5; }
.layers { display: grid; grid-template-columns: 1fr 16px; margin: 6px 0 0 9px; border: 1px solid #bcbcbc; background: #fff; }
.layer { display: grid; grid-template-columns: 34px 40px 26px 1fr 40px; align-items: center; height: 30px; color: #000; font-size: 11px; }
.layer.head { height: 40px; background: #f1f1f1; padding-bottom: 4px; }
.layer.selected { background: #0a96d8; color: #fff; border-radius: 2px; }
.vis, .lock { color: #c6c6c6; }
.vis svg { width: 16px; height: 12px; }
.lock svg { width: 16px; height: 16px; }
.vis.shown { color: #777; }
.selected .vis { color: #fff; }
.selected .lock { color: #d0d0d0; }
.swatch { justify-self: end; width: 16px; height: 16px; border: 1px solid; }
.swatch.top { background: #9e0b0f; border-color: #b81e20; }
.swatch.bottom { background: #087ab0; border-color: #0a8ccc; }
.swatch.pads-fill { background: #35af7c; border-color: #2fc88a; }
.swatch.unrouted { background: #a0a028; border-color: #b4b43a; }
.swatch.dimension { background: #bd9b37; border-color: #d6b33a; }
.swatch.tplace { background: #a0a0a0; border-color: #bbb6a6; }
.layer label { display: flex; gap: 6px; }
.layer b { width: 45px; text-align: right; font-weight: 400; }
.layer input { appearance: none; width: 14px; height: 14px; border: 1px solid #dcdcdc; border-radius: 50%; justify-self: center; background: #fff; }
.layer input:checked { background: #6b9a22; border: 2px solid #fff; }
.list-scroll { padding-left: 5px; }
.list-scroll span { display: block; width: 6px; height: 30px; border-radius: 3px; background: #9a9a9a; }
.list-actions { grid-column: 1 / -1; display: flex; gap: 14px; height: 31px; padding: 6px 0 0 5px; }
.details-head { display: flex; align-items: center; gap: 3px; height: 22px; margin: 7px 2px 0 11px; padding-left: 4px; background: #f5f5f5; font-size: 12px; color: #3f4c5b; }
.details { display: grid; grid-template-columns: 71px 1fr; grid-template-rows: 26px 26px 36px 36px 26px 26px; align-items: center; margin: 3px 0 0 9px; }
.value { color: #444; }
.chips { display: flex; align-items: center; gap: 4px; }
.chips button { width: 30px; height: 30px; border: 2px solid #bcbcbc; border-radius: 4px; background: #fff; }
.chip { display: block; width: 16px; height: 16px; background: #9e0b0f; }
.chip.checker { background: repeating-conic-gradient(#aaa 0 25%, #fff 0 50%) 0 0 / 4px 4px; }
.chip.bright { background: #ff4500; }
.chip.copper { background: #ffbf00; }
.material { margin-left: 77px; }
.reset { width: 110px; height: 23px; margin: 3px 0 0 auto; border: 1px solid #bcbcbc; border-radius: 2px; background: #f5f5f5; color: #777; }

.editor { display: grid; grid-template-columns: 1fr 15px; grid-template-rows: 37px 1fr 16px 32px; border-right: 1px solid #cacaca; }
.command-row { grid-column: 1 / -1; display: flex; align-items: center; padding: 1px 0 0 8px; font-size: 12px; }
.layer-drop { flex: none; width: 194px; height: 26px; align-items: center; padding-left: 4px; }
.layer-drop .chip { flex: none; width: 20px; height: 20px; }
.layer-drop select { height: 24px; padding-left: 6px; }
.drop.layer-drop svg, .command .drop svg { top: 10px; }
.coords { width: 148px; padding-left: 19px; }
.command { flex: 1; padding: 3px 3px 2px 5px; background: #cacaca; }
.command .drop { height: 26px; border-color: #999; background: #cacaca; color: #555; }
.command input { padding: 0 6px; }
.command input::placeholder { color: #555; opacity: 1; }
.canvas { position: relative; background: #282828; }
.board { width: 100%; height: 100%; }
.outline path { fill: none; stroke: #c8a83e; stroke-width: 3; shape-rendering: crispEdges; }
.outline .thick { stroke-width: 4; }
.traces path { fill: none; stroke: #a81212; stroke-width: 8; shape-rendering: crispEdges; }
.pads { fill: #a81212; }
.maker { font: 54px "Liberation Sans", sans-serif; fill: #b01414; }
.pad-names { font: 10px Roboto, sans-serif; fill: #d6a5a5; text-anchor: middle; }
.view-bar { position: absolute; left: 343px; bottom: 4px; display: flex; height: 24px; background: #f1f1f1; padding-right: 4px; }
.view-bar button { width: 26px; padding-right: 4px; }
.view-bar svg { width: 16px; height: 16px; }
.view-bar .on { padding: 0; background: #0a96d8; }
.view-bar .wide { width: 27px; padding: 0; }
.view-bar .wide svg { width: 24px; }
.watermark { position: absolute; right: 10px; bottom: -15px; color: #a5a5a5; opacity: .75; font-size: 14px; white-space: nowrap; }
.watermark p { margin: 0; line-height: 20px; }
.watermark .big { font-size: 19px; line-height: 26px; }
.vscroll { padding: 0 5px; }
.vscroll span { display: block; width: 6px; height: 97%; border-radius: 0 0 3px 3px; background: #9a9a9a; }
.hscroll { grid-column: 1 / -1; padding: 5px 144px 0 8px; }
.hscroll span { display: block; height: 6px; border-radius: 3px; background: #9a9a9a; }
.status { grid-column: 1 / -1; margin-left: 1px; padding-left: 10px; border-bottom: 2px solid #cacaca; border-left: 1px solid #cacaca; font: 13px/30px "Liberation Mono", monospace; }

.side { display: flex; flex-direction: column; gap: 3px; padding: 3px 1px 0 3px; }
.side-tab { flex-direction: column; justify-content: flex-start; gap: 16px; padding-top: 5px; border: 1px solid #cacaca; color: #333; }
.side-tab span { writing-mode: vertical-rl; transform: rotate(180deg); }
.inspector { height: 131px; }
.filter { height: 175px; }
```
